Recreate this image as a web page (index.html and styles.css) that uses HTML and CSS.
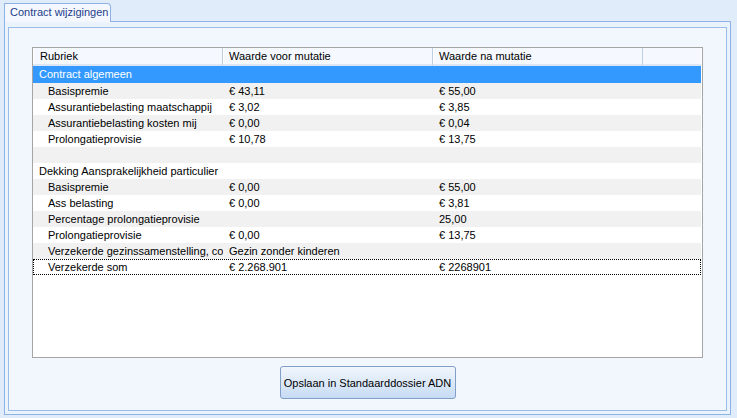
FILE: index.html
```html
<!DOCTYPE html>
<html>
<head>
<meta charset="utf-8">
<link rel="stylesheet" href="styles.css">
</head>
<body>
<div class="window">
  <div class="tabstrip">
    <div class="tab">Contract wijzigingen</div>
  </div>
  <div class="panel">
    <div class="inner">
      <div class="list">
        <div class="hdr">
          <div class="hc c1">Rubriek</div>
          <div class="hc c2">Waarde voor mutatie</div>
          <div class="hc c3">Waarde na mutatie</div>
          <div class="hfill"></div>
        </div>
        <div class="row sel first"><div class="cell c1 grp">Contract algemeen</div><div class="cell c2"></div><div class="cell c3"></div></div>
        <div class="row alt"><div class="cell c1 sub">Basispremie</div><div class="cell c2">€ 43,11</div><div class="cell c3">€ 55,00</div></div>
        <div class="row"><div class="cell c1 sub">Assurantiebelasting maatschappij</div><div class="cell c2">€ 3,02</div><div class="cell c3">€ 3,85</div></div>
        <div class="row alt"><div class="cell c1 sub">Assurantiebelasting kosten mij</div><div class="cell c2">€ 0,00</div><div class="cell c3">€ 0,04</div></div>
        <div class="row"><div class="cell c1 sub">Prolongatieprovisie</div><div class="cell c2">€ 10,78</div><div class="cell c3">€ 13,75</div></div>
        <div class="row alt"><div class="cell c1 sub"></div><div class="cell c2"></div><div class="cell c3"></div></div>
        <div class="row"><div class="cell c1 grp">Dekking Aansprakelijkheid particulier</div><div class="cell c2"></div><div class="cell c3"></div></div>
        <div class="row alt"><div class="cell c1 sub">Basispremie</div><div class="cell c2">€ 0,00</div><div class="cell c3">€ 55,00</div></div>
        <div class="row"><div class="cell c1 sub">Ass belasting</div><div class="cell c2">€ 0,00</div><div class="cell c3">€ 3,81</div></div>
        <div class="row alt"><div class="cell c1 sub">Percentage prolongatieprovisie</div><div class="cell c2"></div><div class="cell c3">25,00</div></div>
        <div class="row"><div class="cell c1 sub">Prolongatieprovisie</div><div class="cell c2">€ 0,00</div><div class="cell c3">€ 13,75</div></div>
        <div class="row alt"><div class="cell c1 sub">Verzekerde gezinssamenstelling, code</div><div class="cell c2">Gezin zonder kinderen</div><div class="cell c3"></div></div>
        <div class="row focus"><div class="cell c1 sub">Verzekerde som</div><div class="cell c2">€ 2.268.901</div><div class="cell c3">€ 2268901</div></div>
      </div>
      <div class="actions">
        <button class="btn">Opslaan in Standaarddossier ADN</button>
      </div>
    </div>
  </div>
</div>
</body>
</html>
```
FILE: styles.css
```css
* { box-sizing: border-box; }
html, body {
  margin: 0;
  padding: 0;
  width: 737px;
  height: 418px;
  overflow: hidden;
  background: #e1ecfb;
  font-family: "Liberation Sans", Arial, sans-serif;
  font-size: 11px;
  color: #000;
}
.window {
  padding: 3px 6px 0 4px;
}
.tabstrip {
  display: flex;
  height: 18px;
  position: relative;
  z-index: 2;
}
.tab {
  width: 107px;
  height: 19px;
  border: 1px solid #8db2e5;
  border-bottom: none;
  border-top-right-radius: 4px;
  background: #f4f8fe;
  color: #1e3c8c;
  padding-left: 5px;
  line-height: 17px;
  white-space: nowrap;
}
.panel {
  height: 394px;
  border: 1px solid #8db2e5;
  background: #eaf2fc;
  padding: 5px 3px 3px 3px;
}
.inner {
  height: 384px;
  border: 1px solid #99bce9;
  background: #f2f7fe;
  padding: 19px 23px 11px 23px;
  display: flex;
  flex-direction: column;
}
.list {
  height: 311px;
  border: 1px solid #a5a5a5;
  background: #fff;
  padding-right: 1px;
  display: flex;
  flex-direction: column;
}
.hdr {
  display: flex;
  height: 18px;
  background: #f5f8fe;
  flex: none;
}
.hc {
  height: 18px;
  line-height: 17px;
  white-space: nowrap;
  overflow: hidden;
  border-right: 1px solid #bfcde2;
  border-bottom: 2px solid #dde6f3;
  box-shadow: inset 1px 0 #ffffff;
}
.hdr .c1 { width: 190px; padding-left: 7px; }
.hdr .c2 { width: 210px; padding-left: 6px; }
.hdr .c3 { width: 210px; padding-left: 6px; }
.hfill {
  flex: 1;
  border-bottom: 2px solid #dde6f3;
}
.row {
  display: flex;
  height: 16px;
  line-height: 16px;
  flex: none;
}
.row.first { height: 17px; line-height: 17px; }
.row.alt { background: #f1f1f1; }
.row.sel { background: #3399ff; color: #fff; }
.row.focus { outline: 1px dotted #000; outline-offset: -1px; }
.cell {
  white-space: nowrap;
  overflow: hidden;
}
.cell.c1 { width: 190px; padding-right: 1px; }
.cell.c2 { width: 210px; padding-left: 6px; }
.cell.c3 { width: 210px; padding-left: 6px; }
.cell.grp { padding-left: 6px; }
.cell.sub { padding-left: 15px; }
.actions {
  display: flex;
  justify-content: center;
  margin-top: 8px;
}
.btn {
  width: 176px;
  height: 33px;
  border: 1px solid #7f9fc6;
  border-radius: 3px;
  background: linear-gradient(to bottom, #f1f6fd 0%, #dde9f8 50%, #c6dbf4 100%);
  font-family: "Liberation Sans", Arial, sans-serif;
  font-size: 11px;
  color: #000;
  padding: 0;
  white-space: nowrap;
}
```
